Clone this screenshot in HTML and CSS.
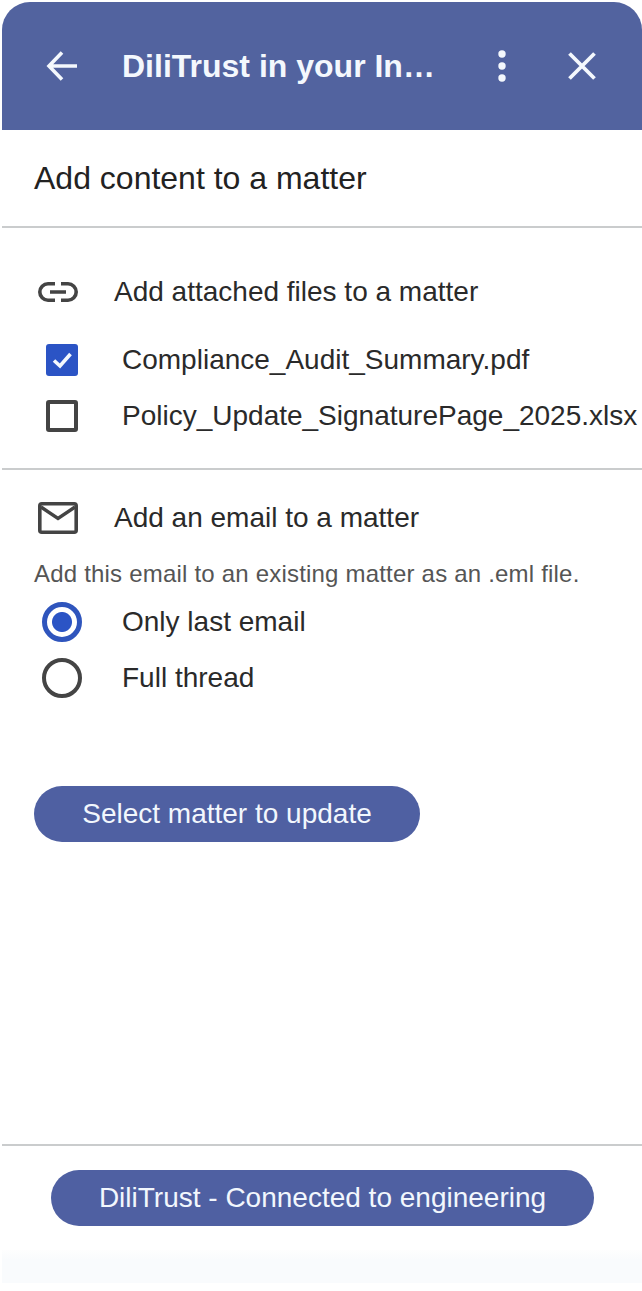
FILE: index.html
```html
<!DOCTYPE html>
<html lang="en">
<head>
<meta charset="utf-8">
<title>DiliTrust</title>
<link rel="stylesheet" href="styles.css">
</head>
<body>
<div class="panel">
  <header class="header">
    <svg class="ico-back" width="36" height="36" viewBox="0 0 36 36"><path d="M33 18H6M18 4.500 5 18 18 31.500" fill="none" stroke="#f4f8fd" stroke-width="3.600"/></svg>
    <h1 class="title">DiliTrust in your In…</h1>
    <svg class="ico-more" width="12" height="34" viewBox="0 0 12 34"><circle cx="6" cy="5" r="3.700" fill="#f4f8fd"/><circle cx="6" cy="17" r="3.700" fill="#f4f8fd"/><circle cx="6" cy="29" r="3.700" fill="#f4f8fd"/></svg>
    <svg class="ico-close" width="30" height="30" viewBox="0 0 30 30"><path d="M2.500 2.500 27.500 27.500M27.500 2.500 2.500 27.500" fill="none" stroke="#f4f8fd" stroke-width="3.800"/></svg>
  </header>

  <div class="heading-row"><h2 class="heading">Add content to a matter</h2></div>

  <section class="attach">
    <div class="sec-head">
      <svg class="sec-ico" width="40" height="20" viewBox="0 0 40 20"><path d="M17 1.800H10a8.200 8.200 0 0 0 0 16.400h7M23 1.800h7a8.200 8.200 0 0 1 0 16.400h-7M12 10h16" fill="none" stroke="#444" stroke-width="3.600"/></svg>
      <span class="sec-title">Add attached files to a matter</span>
    </div>
    <div class="opt opt-first">
      <span class="box box-on"><svg width="32" height="32" viewBox="0 0 32 32"><path d="M8 16.500 14 22 24.500 10" fill="none" stroke="#f4f8fd" stroke-width="3.600"/></svg></span>
      <span class="opt-text">Compliance_Audit_Summary.pdf</span>
    </div>
    <div class="opt">
      <span class="box"></span>
      <span class="opt-text">Policy_Update_SignaturePage_2025.xlsx</span>
    </div>
  </section>

  <section class="email">
    <div class="sec-head">
      <svg class="sec-ico" width="40" height="32" viewBox="0 0 40 32"><rect x="1.800" y="1.800" width="36.400" height="28.400" rx="2" fill="none" stroke="#444" stroke-width="3.600"/><path d="M3 5 20 16.500 37 5" fill="none" stroke="#444" stroke-width="3.400"/></svg>
      <span class="sec-title">Add an email to a matter</span>
    </div>
    <p class="hint">Add this email to an existing matter as an .eml file.</p>
    <div class="opt opt-radio">
      <span class="radio radio-on"></span>
      <span class="opt-text">Only last email</span>
    </div>
    <div class="opt opt-radio">
      <span class="radio"></span>
      <span class="opt-text">Full thread</span>
    </div>
    <button class="pill pill-select" type="button">Select matter to update</button>
  </section>

  <footer class="footer">
    <button class="pill pill-status" type="button">DiliTrust - Connected to engineering</button>
  </footer>
  <div class="fade"></div>
</div>
</body>
</html>
```
FILE: styles.css
```css
* { box-sizing: border-box; }
html, body { margin: 0; padding: 0; background: #fff; }
body { font-family: "Liberation Sans", Arial, sans-serif; color: #222; height: 1291px; overflow: hidden; }
.panel { margin: 2px 0 0 2px; width: 640px; display: flex; flex-direction: column; background: #fff; }
.header { height: 128px; background: #52639f; border-radius: 28px 28px 0 0; display: flex; align-items: center; color: #f4f8fd; }
.ico-back { margin-left: 42px; flex: none; }
.title { margin: 0 0 0 42px; width: 312px; flex: none; font-size: 32px; font-weight: 700; white-space: nowrap; line-height: 1; }
.ico-more { margin-left: 62px; flex: none; }
.ico-close { margin-left: 59px; flex: none; }
.heading-row { height: 98px; border-bottom: 2px solid #cacccd; display: flex; align-items: center; padding-left: 32px; }
.heading { margin: 0; font-size: 32px; font-weight: 400; color: #222; line-height: 1; }
.attach { height: 242px; border-bottom: 2px solid #cacccd; padding-top: 46px; }
.sec-head { display: flex; align-items: center; padding-left: 36px; height: 36px; }
.sec-ico { flex: none; }
.sec-title { margin-left: 36px; font-size: 28px; color: #2a2a2a; white-space: nowrap; }
.opt { display: flex; align-items: center; height: 56px; }
.opt-first { margin-top: 22px; }
.box { flex: none; width: 32px; height: 32px; margin-left: 44px; border: 4px solid #444; border-radius: 3px; display: flex; align-items: center; justify-content: center; }
.box-on { background: #2b54c5; border: 0; }
.opt-text { margin-left: 44px; font-size: 28px; color: #2a2a2a; white-space: nowrap; }
.email { padding-top: 30px; height: 676px; border-bottom: 2px solid #cacccd; }
.hint { margin: 20px 0 2px 32px; font-size: 24px; letter-spacing: 0.2px; line-height: 36px; color: #555; white-space: nowrap; }
.opt-radio { height: 56px; }
.radio { flex: none; width: 40px; height: 40px; margin-left: 40px; border: 4px solid #444; border-radius: 50%; }
.radio-on { border: 5px solid #2f55bd; background: radial-gradient(circle, #2b54c5 0 9.500px, #fff 10.500px); }
.opt-radio .opt-text { margin-left: 40px; }
.pill { display: block; border: 0; padding: 0; background: #4f60a2; color: #f2f7fd; font-family: inherit; font-size: 28px; border-radius: 28px; height: 56px; }
.pill-select { margin: 80px 0 0 32px; width: 386px; }
.footer { height: 104px; padding: 24px 0 0 49px; }
.pill-status { width: 543px; }
.fade { height: 33px; background: linear-gradient(#fefefe, #f9fbfd 30%); }
```
